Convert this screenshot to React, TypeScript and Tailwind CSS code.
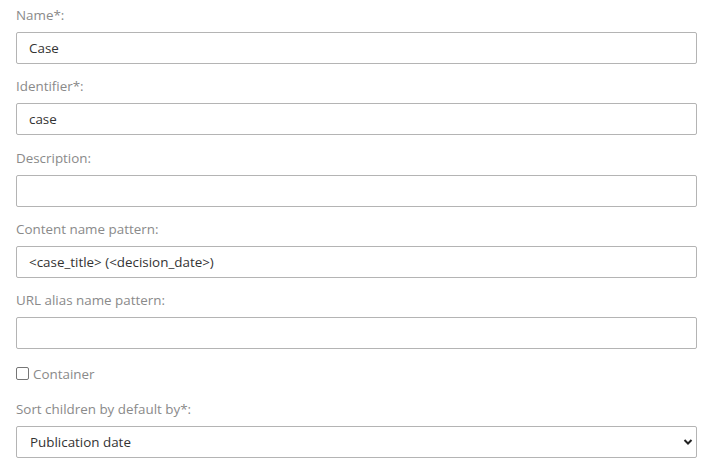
import React from 'react';

const fields = [
  { id: 'name', label: 'Name*:', value: 'Case' },
  { id: 'identifier', label: 'Identifier*:', value: 'case' },
  { id: 'description', label: 'Description:', value: '' },
  { id: 'pattern', label: 'Content name pattern:', value: '<case_title> (<decision_date>)' },
  { id: 'url', label: 'URL alias name pattern:', value: '' },
];

const App = () => {
  return (
    <div className="flex w-[720px] h-[466px] flex-col bg-white px-4 pt-[5px] text-[13.4px]" style={{ fontFamily: '"Open Sans", sans-serif' }}>
      {fields.map((f) => (
        <div key={f.id} className="mb-[12.3px] flex flex-col">
          <label htmlFor={f.id} className="leading-5 text-[#8a8a8a] mb-[7px]">
            {f.label}
          </label>
          <input
            id={f.id}
            defaultValue={f.value}
            className="h-[32px] w-[681px] rounded-[2px] border border-[#b4b4b4] px-3 text-[#333] outline-none"
          />
        </div>
      ))}
      <div className="mt-[2.5px] mb-[15px] flex items-center gap-[4px] leading-5">
        <input type="checkbox" id="container" className="h-[13px] w-[13px] appearance-none rounded-[2px] border border-[#767676] bg-white" />
        <label htmlFor="container" className="text-[#8a8a8a]">Container</label>
      </div>
      <div className="flex flex-col">
        <label htmlFor="sort" className="leading-5 text-[#8a8a8a] mb-[7px]">
          Sort children by default by*:
        </label>
        <div className="relative w-[681px]">
          <select
            id="sort"
            defaultValue="pub"
            className="h-[32px] w-full appearance-none rounded-[2px] border border-[#b4b4b4] bg-white pl-[13px] text-[#333] outline-none"
          >
            <option value="pub">Publication date</option>
          </select>
          <svg className="pointer-events-none absolute right-[4px] top-[12px]" width="10" height="8" viewBox="0 0 10 8">
            <path d="M1.5 2 L5 5.5 L8.5 2" fill="none" stroke="#222" strokeWidth="2" />
          </svg>
        </div>
      </div>
    </div>
  );
};

export default App;
